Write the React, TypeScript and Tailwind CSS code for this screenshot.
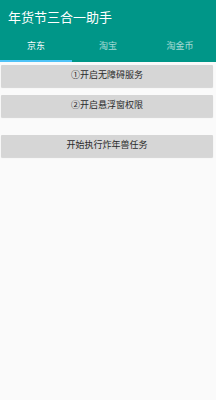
const font = "font-['Roboto','Noto_Sans_CJK_SC',sans-serif]";

function ActionButton({ label }: { label: string }) {
    return (
        <button className="ml-[1px] mr-[3px] flex h-[22px] items-center justify-center rounded-[1px] bg-[#d6d6d6] text-[9px] text-[#2a2a2a] shadow-[0_1px_1px_rgba(0,0,0,0.15)]">
            {label}
        </button>
    );
}

export default function App() {
    const tabs = ['京东', '淘宝', '淘金币'];

    return (
        <div className={`flex h-[400px] w-[216px] flex-col bg-[#fafafa] ${font}`}>
            <div className="bg-[#009688]">
                <div className="flex h-[35px] items-center pl-[8px] text-[13px] text-white">
                    年货节三合一助手
                </div>
                <div className="grid h-[27px] grid-cols-3">
                    {tabs.map((t, i) => (
                        <div key={t} className="relative flex items-center justify-center pb-[4px]">
                            <span className={`text-[9px] ${i === 0 ? 'text-white' : 'text-white/65'}`}>{t}</span>
                            {i === 0 && (
                                <div className="absolute bottom-0 left-0 h-[2px] w-full bg-[#4fc3f7]" />
                            )}
                        </div>
                    ))}
                </div>
            </div>
            <div className="flex flex-col gap-[8px] pt-[3px]">
                <ActionButton label="①开启无障碍服务" />
                <ActionButton label="②开启悬浮窗权限" />
                <div className="mt-[10px] flex flex-col">
                    <ActionButton label="开始执行炸年兽任务" />
                </div>
            </div>
        </div>
    );
}
